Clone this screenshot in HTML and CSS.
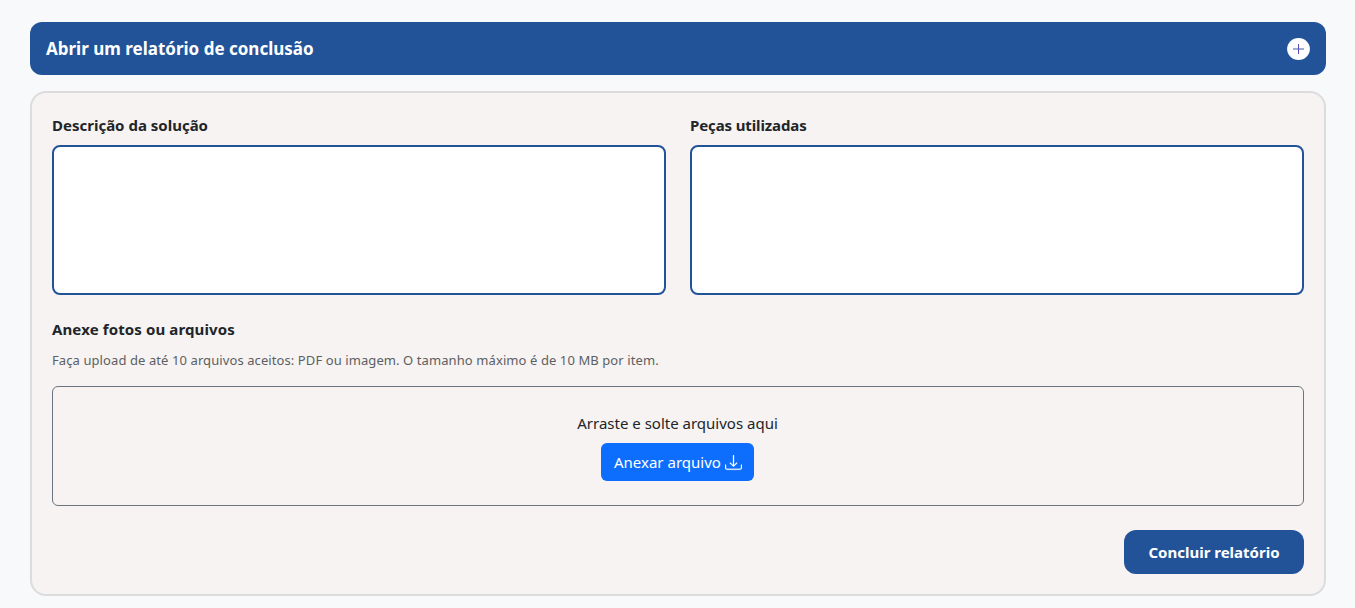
FILE: index.html
```html
<!DOCTYPE html>
<html lang="pt-BR">
<head>
<meta charset="utf-8">
<title>Relatório de conclusão</title>
<link rel="stylesheet" href="styles.css">
</head>
<body>
<main class="page">
  <header class="banner">
    <h1 class="banner-title">Abrir um relatório de conclusão</h1>
    <svg class="banner-icon" viewBox="0 0 23 22" aria-hidden="true">
      <ellipse cx="11.5" cy="11" rx="11.4" ry="11" fill="#fff"/>
      <path d="M6 11h11" stroke="#9caed4" stroke-width="2"/>
      <path d="M11.5 6v10" stroke="#5a4bb0" stroke-width="1"/>
    </svg>
  </header>
  <form class="card">
    <div class="fields">
      <div class="field">
        <label class="label" for="descricao">Descrição da solução</label>
        <textarea class="textarea" id="descricao"></textarea>
      </div>
      <div class="field">
        <label class="label label-parts" for="pecas">Peças utilizadas</label>
        <textarea class="textarea" id="pecas"></textarea>
      </div>
    </div>
    <h2 class="label label-files">Anexe fotos ou arquivos</h2>
    <p class="hint">Faça upload de até 10 arquivos aceitos: PDF ou imagem. O tamanho máximo é de 10 MB por item.</p>
    <div class="dropzone">
      <p class="drop-text">Arraste e solte arquivos aqui</p>
      <button class="attach" type="button">
        <span class="attach-text">Anexar arquivo</span>
        <svg class="attach-icon" viewBox="0 0 16 16" fill="currentColor" stroke="currentColor" stroke-width=".2" aria-hidden="true">
          <path d="M.5 9.900a.5.5 0 0 1 .5.5v2.500a1 1 0 0 0 1 1h12a1 1 0 0 0 1-1v-2.500a.5.5 0 0 1 1 0v2.500a2 2 0 0 1-2 2H2a2 2 0 0 1-2-2v-2.500a.5.5 0 0 1 .5-.5z"/>
          <path d="M7.646 11.854a.5.5 0 0 0 .708 0l3-3a.5.5 0 0 0-.708-.708L8.500 10.293V1.500a.5.5 0 0 0-1 0v8.793L5.354 8.146a.5.5 0 1 0-.708.708l3 3z"/>
        </svg>
      </button>
    </div>
    <div class="actions">
      <button class="submit" type="button">Concluir relatório</button>
    </div>
  </form>
</main>
</body>
</html>
```

FILE: styles.css
```css
* { box-sizing: border-box; }
body {
  margin: 0;
  background: #f8f9fb;
  color: #212529;
  font-family: "Noto Sans", "Open Sans", sans-serif;
  font-size: 15px;
  line-height: 24px;
  overflow: hidden;
}
h1, h2, p { margin: 0; }
button { font-family: inherit; border: 0; white-space: nowrap; }
.page { padding: 22px 29px 12px 30px; }
.banner {
  display: flex;
  align-items: center;
  justify-content: space-between;
  height: 53px;
  padding: 0 16px;
  border-radius: 12px;
  background: #225399;
  color: #fff;
}
.banner-title { font-size: 17px; line-height: 27px; font-weight: 700; white-space: nowrap; }
.banner-icon { display: block; width: 23px; height: 22px; }
.card {
  height: 505px;
  margin-top: 16px;
  padding: 20px;
  border: 2px solid #dcdcdc;
  border-radius: 16px;
  background: #f6f3f2;
}
.fields { display: grid; grid-template-columns: 1fr 1fr; gap: 24px; }
.label { display: block; font-size: 15px; line-height: 24px; font-weight: 700; white-space: nowrap; }
.label-parts { letter-spacing: -0.12px; }
.field .label { margin-bottom: 8px; }
.textarea {
  display: block;
  width: 100%;
  height: 150px;
  border: 2px solid #225399;
  border-radius: 8px;
  background: #fff;
  resize: none;
  outline: none;
}
.label-files { margin-top: 22px; letter-spacing: 0.12px; }
.hint { margin-top: 9px; font-size: 13px; letter-spacing: 0.09px; line-height: 20px; color: #5c5f63; white-space: nowrap; }
.dropzone {
  display: flex;
  flex-direction: column;
  align-items: center;
  height: 120px;
  margin-top: 16px;
  padding: 24px 1px 0 0;
  border: 1px solid #6c757d;
  border-radius: 6px;
}
.drop-text { white-space: nowrap; }
.attach {
  display: flex;
  align-items: center;
  justify-content: space-between;
  width: 153px;
  height: 38px;
  margin-top: 8px;
  padding: 0 12px 0 13px;
  border-radius: 6px;
  background: #0d6efd;
  color: #fff;
  font-size: 15px;
}
.attach-icon { width: 17px; height: 17px; }
.actions { display: flex; justify-content: flex-end; margin-top: 24px; }
.submit {
  width: 180px;
  height: 44px;
  padding: 0;
  border-radius: 12px;
  background: #225399;
  color: #fff;
  font-size: 15px;
  font-weight: 700;
}
```
